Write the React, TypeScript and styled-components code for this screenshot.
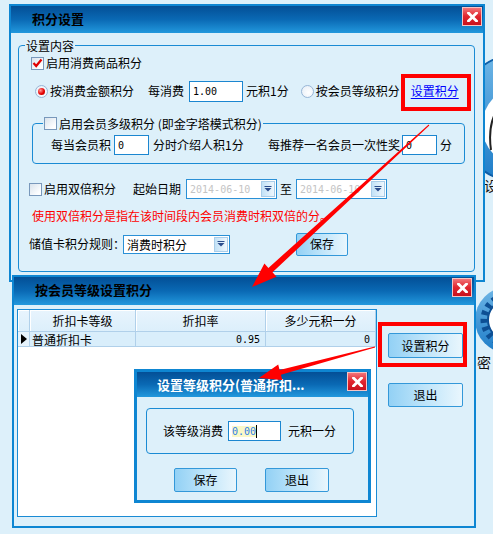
import React from "react";
import styled, { createGlobalStyle } from "styled-components";

const BG = "#ddf0fa";
const LINE = "#1a8bd4";

const GlobalStyle = createGlobalStyle`
  html, body {
    margin: 0;
    padding: 0;
    background: ${BG};
  }
  body {
    font-family: "Noto Sans CJK SC", "Noto Sans", sans-serif;
    font-size: 12px;
    color: #000;
  }
`;

const Desktop = styled.div`
  position: relative;
  width: 493px;
  height: 534px;
  overflow: hidden;
  background: ${BG};
`;

const DesktopArt = styled.svg`
  position: absolute;
  left: 0;
  top: 0;
`;

const DesktopGlyph = styled.span<{ $x: number; $y: number }>`
  position: absolute;
  left: ${(p) => p.$x}px;
  top: ${(p) => p.$y}px;
  font-size: 14px;
  line-height: 16px;
  color: #111;
`;

const Window = styled.div<{ $x: number; $y: number; $w: number; $h: number; $border: number }>`
  position: absolute;
  left: ${(p) => p.$x}px;
  top: ${(p) => p.$y}px;
  width: ${(p) => p.$w}px;
  height: ${(p) => p.$h}px;
  box-sizing: border-box;
  border: ${(p) => p.$border}px solid #0e86d2;
  background: ${BG};
  display: flex;
  flex-direction: column;
`;

const TitleBar = styled.div<{ $h: number }>`
  flex: none;
  height: ${(p) => p.$h}px;
  display: flex;
  align-items: flex-start;
  background: linear-gradient(#034f96, #0a69b4 50%, #2298dd);
`;

const Title = styled.div<{ $pad: number; $lh: number; $light?: boolean }>`
  flex: 1;
  padding-left: ${(p) => p.$pad}px;
  line-height: ${(p) => p.$lh}px;
  font-size: 13px;
  font-weight: bold;
  color: ${(p) => (p.$light ? "#fff" : "#000")};
  white-space: nowrap;
  overflow: hidden;
`;

const CloseBox = styled.div<{ $mt: number; $mr: number }>`
  flex: none;
  width: 20px;
  height: 19px;
  margin: ${(p) => p.$mt}px ${(p) => p.$mr}px 0 0;
  box-sizing: border-box;
  border: 1px solid #f6c4c4;
  background: linear-gradient(#f27479, #e1262f 48%, #c9111d);
  display: flex;
  align-items: center;
  justify-content: center;
`;

const Body = styled.div<{ $pad: string; $row?: boolean }>`
  flex: 1;
  padding: ${(p) => p.$pad};
  display: flex;
  flex-direction: ${(p) => (p.$row ? "row" : "column")};
  align-items: flex-start;
  min-height: 0;
`;

const Group = styled.div<{ $pad: string; $mt?: number; $ml?: number }>`
  position: relative;
  align-self: stretch;
  margin: ${(p) => p.$mt ?? 0}px 0 0 ${(p) => p.$ml ?? 0}px;
  padding: ${(p) => p.$pad};
  border: 1px solid ${LINE};
  border-radius: 4px;
  display: flex;
  flex-direction: column;
`;

const Legend = styled.div<{ $left: number }>`
  position: absolute;
  top: -8px;
  left: ${(p) => p.$left}px;
  height: 15px;
  padding: 0 1px;
  background: ${BG};
  display: flex;
  align-items: center;
  gap: 2px;
  line-height: 15px;
  white-space: nowrap;
`;

const Row = styled.div<{ $h: number; $mt?: number; $pl?: number }>`
  display: flex;
  align-items: center;
  height: ${(p) => p.$h}px;
  margin-top: ${(p) => p.$mt ?? 0}px;
  padding-left: ${(p) => p.$pl ?? 0}px;
  white-space: nowrap;
`;

const Label = styled.span<{ $ml?: number; $auto?: boolean }>`
  flex: none;
  margin-left: ${(p) => (p.$auto ? "auto" : `${p.$ml ?? 0}px`)};
  line-height: 14px;
`;

const Warning = styled(Label)`
  color: #ff0000;
`;

const LinkText = styled(Label)`
  color: #0000ff;
  text-decoration: underline;
  text-underline-offset: 2px;
`;

const CheckBox = styled.span<{ $ml?: number }>`
  flex: none;
  width: 13px;
  height: 13px;
  margin-left: ${(p) => p.$ml ?? 0}px;
  box-sizing: border-box;
  border: 1px solid #7898bb;
  background: linear-gradient(135deg, #d9e3ec, #fdfeff 80%);
  display: inline-flex;
  align-items: center;
  justify-content: center;
`;

const Radio = styled.span<{ $on?: boolean; $ml?: number }>`
  flex: none;
  width: 13px;
  height: 13px;
  margin-left: ${(p) => p.$ml ?? 0}px;
  box-sizing: border-box;
  border: 1px solid #97b6d6;
  border-radius: 50%;
  background: radial-gradient(circle at 60% 60%, #ffffff, #e3ecf5);
  display: inline-flex;
  align-items: center;
  justify-content: center;
  &::after {
    content: "";
    display: ${(p) => (p.$on ? "block" : "none")};
    width: 7px;
    height: 7px;
    border-radius: 50%;
    background: radial-gradient(circle at 35% 35%, #ff9a9a, #e60000 55%, #a80000);
  }
`;

const TextBox = styled.span<{ $w: number; $h: number; $ml?: number }>`
  flex: none;
  width: ${(p) => p.$w}px;
  height: ${(p) => p.$h}px;
  margin-left: ${(p) => p.$ml ?? 0}px;
  box-sizing: border-box;
  border: 1px solid #1b86d0;
  background: #fff;
  padding-left: 3px;
  display: flex;
  align-items: center;
  font-family: "DejaVu Sans Mono", "Liberation Mono", monospace;
  font-size: 10px;
`;

const Picker = styled.span<{ $w: number; $h: number; $ml?: number }>`
  flex: none;
  width: ${(p) => p.$w}px;
  height: ${(p) => p.$h}px;
  margin-left: ${(p) => p.$ml ?? 0}px;
  box-sizing: border-box;
  border: 1px solid #2a90d6;
  background: #fff;
  display: flex;
  align-items: stretch;
`;

const PickerText = styled.span<{ $muted?: boolean; $mono?: boolean }>`
  flex: 1;
  padding-left: 3px;
  display: flex;
  align-items: center;
  color: ${(p) => (p.$muted ? "#c4c4c4" : "#000")};
  font-family: ${(p) =>
    p.$mono ? `"DejaVu Sans Mono", "Liberation Mono", monospace` : "inherit"};
  font-size: ${(p) => (p.$mono ? 10 : 12)}px;
  overflow: hidden;
`;

const DropButton = styled.span`
  flex: none;
  width: 14px;
  margin: 1px;
  box-sizing: border-box;
  border: 1px solid #a9cde9;
  background: linear-gradient(90deg, #c3e2f7, #eef7fd);
  display: flex;
  align-items: center;
  justify-content: center;
`;

const Button = styled.span<{ $w: number; $h: number; $ml?: number; $mt?: number }>`
  flex: none;
  width: ${(p) => p.$w}px;
  height: ${(p) => p.$h}px;
  margin: ${(p) => p.$mt ?? 0}px 0 0 ${(p) => p.$ml ?? 0}px;
  box-sizing: border-box;
  border: 1px solid #3398d9;
  border-radius: 2px;
  background: linear-gradient(90deg, #93d1f5, #bfe5fa 50%, #e9f6fd);
  display: flex;
  align-items: center;
  justify-content: center;
  line-height: 14px;
`;

const SideColumn = styled.div`
  display: flex;
  flex-direction: column;
  margin-left: 11px;
  padding-top: 24px;
`;

const Grid = styled.div`
  flex: none;
  width: 360px;
  height: 208px;
  box-sizing: border-box;
  border: 1px solid ${LINE};
  background: #fff;
  display: grid;
  grid-template-columns: 12px 106px 130px 110px;
  grid-template-rows: 22px 15px;
  align-content: start;
`;

const HeadCell = styled.div`
  box-sizing: border-box;
  border-right: 1px solid #b0d0ea;
  border-bottom: 1px solid #b0d0ea;
  background: linear-gradient(#e8f4fd, #dceffb);
  box-shadow: inset 1px 1px 0 #fff;
  display: flex;
  align-items: center;
  justify-content: center;
  line-height: 14px;
  white-space: nowrap;
`;

const DataCell = styled.div<{ $right?: boolean; $mono?: boolean }>`
  box-sizing: border-box;
  border-right: 1px solid #b0d0ea;
  border-bottom: 1px solid #b0d0ea;
  background: #d9eefb;
  display: flex;
  align-items: center;
  justify-content: ${(p) => (p.$right ? "flex-end" : "flex-start")};
  padding: ${(p) => (p.$right ? "0 5px 0 0" : "0 0 0 2px")};
  font-family: ${(p) =>
    p.$mono ? `"DejaVu Sans Mono", "Liberation Mono", monospace` : "inherit"};
  font-size: ${(p) => (p.$mono ? 10 : 12)}px;
  line-height: 13px;
  white-space: nowrap;
  overflow: hidden;
`;

const RowMarker = styled(DataCell)`
  background: #e6f3fc;
  justify-content: center;
  padding: 0;
  &::before {
    content: "";
    border-left: 6px solid #000;
    border-top: 5px solid transparent;
    border-bottom: 5px solid transparent;
  }
`;

const Selected = styled.span`
  background: #fbf8c8;
  color: #2f7fe6;
`;

const Caret = styled.span`
  width: 1px;
  height: 13px;
  background: #000;
`;

const Highlight = styled.div<{ $x: number; $y: number; $w: number; $h: number }>`
  position: absolute;
  left: ${(p) => p.$x}px;
  top: ${(p) => p.$y}px;
  width: ${(p) => p.$w}px;
  height: ${(p) => p.$h}px;
  box-sizing: border-box;
  border: 4px solid #ff0000;
`;

const Overlay = styled.svg`
  position: absolute;
  left: 0;
  top: 0;
  pointer-events: none;
`;

const Tick = () => (
  <svg width="11" height="10" viewBox="0 0 11 10">
    <polyline points="1.5,5 4.2,8 9.5,1.5" fill="none" stroke="#e00000" strokeWidth="2.2" />
  </svg>
);

const DownArrow = () => (
  <svg width="8" height="6" viewBox="0 0 8 6">
    <rect x="0.5" y="0" width="7" height="1" fill="#2b4c8c" />
    <polygon points="0.5,2 7.5,2 4,5.5" fill="#2b4c8c" />
  </svg>
);

const Close = ({ mt, mr }: { mt: number; mr: number }) => (
  <CloseBox $mt={mt} $mr={mr}>
    <svg width="11" height="10" viewBox="0 0 11 10">
      <path d="M1.5 1 L9.5 9 M9.5 1 L1.5 9" stroke="#fff" strokeWidth="2.8" strokeLinecap="square" />
    </svg>
  </CloseBox>
);

const DateBox = ({ ml }: { ml: number }) => (
  <Picker $w={91} $h={20} $ml={ml}>
    <PickerText $muted $mono>
      2014-06-10
    </PickerText>
    <DropButton>
      <DownArrow />
    </DropButton>
  </Picker>
);

// tapered red arrow, thin at the tail and widening towards the head
const arrowPoints = (
  x1: number,
  y1: number,
  x2: number,
  y2: number,
  head: number,
  headHalf: number,
  neck: number
) => {
  const len = Math.hypot(x2 - x1, y2 - y1);
  const ux = (x2 - x1) / len;
  const uy = (y2 - y1) / len;
  const nx = -uy;
  const ny = ux;
  const bx = x2 - ux * head;
  const by = y2 - uy * head;
  const pts = [
    [x1 + nx * 0.5, y1 + ny * 0.5],
    [bx + nx * neck, by + ny * neck],
    [bx + nx * headHalf, by + ny * headHalf],
    [x2, y2],
    [bx - nx * headHalf, by - ny * headHalf],
    [bx - nx * neck, by - ny * neck],
    [x1 - nx * 0.5, y1 - ny * 0.5],
  ];
  return pts.map((p) => `${p[0].toFixed(1)},${p[1].toFixed(1)}`).join(" ");
};

export default function App() {
  return (
    <Desktop>
      <GlobalStyle />

      <DesktopArt width={493} height={534}>
        <defs>
          <linearGradient id="disc" x1="0" y1="0" x2="0" y2="1">
            <stop offset="0" stopColor="#6fb6e6" />
            <stop offset="1" stopColor="#1d7cc8" />
          </linearGradient>
        </defs>
        <circle cx={520} cy={118} r={64} fill="url(#disc)" stroke="#0d5ea8" strokeWidth={2} />
        <circle cx={522} cy={126} r={40} fill="#fff" />
        <path d="M491 150 Q487 122 500 106" fill="none" stroke="#222" strokeWidth={2} />
        <circle cx={508} cy={320} r={33} fill="url(#disc)" />
        <circle cx={508} cy={320} r={24} fill="none" stroke="#0d4f94" strokeWidth={7} strokeDasharray="4 4" />
        <circle cx={508} cy={320} r={20} fill="#fff" stroke="#0d4f94" strokeWidth={2} />
      </DesktopArt>
      <DesktopGlyph $x={484} $y={177}>设</DesktopGlyph>
      <DesktopGlyph $x={477} $y={354}>密</DesktopGlyph>

      <Window $x={9} $y={4} $w={476} $h={278} $border={2}>
        <TitleBar $h={27}>
          <Title $pad={21} $lh={25}>积分设置</Title>
          <Close mt={1} mr={1} />
        </TitleBar>
        <Body $pad="12px 8px 0 7px">
          <Group $pad="6px 9px 15px 10px">
            <Legend $left={6}>设置内容</Legend>
            <Row $h={22} $pl={2}>
              <CheckBox>
                <Tick />
              </CheckBox>
              <Label $ml={2}>启用消费商品积分</Label>
            </Row>
            <Row $h={34} $pl={6}>
              <Radio $on />
              <Label $ml={2}>按消费金额积分</Label>
              <Label $ml={14}>每消费</Label>
              <TextBox $w={54} $h={21} $ml={5}>
                1.00
              </TextBox>
              <Label $ml={3}>元积1分</Label>
              <Radio $ml={12} />
              <Label $ml={2}>按会员等级积分</Label>
              <LinkText $ml={11}>设置积分</LinkText>
            </Row>
            <Group $mt={15} $ml={3} $pad="10px 12px 7px 18px">
              <Legend $left={10}>
                <CheckBox />
                <span>启用会员多级积分 (即金字塔模式积分)</span>
              </Legend>
              <Row $h={22}>
                <Label>每当会员积</Label>
                <TextBox $w={35} $h={20} $ml={3}>
                  0
                </TextBox>
                <Label $ml={4}>分时介绍人积1分</Label>
                <Label $auto>每推荐一名会员一次性奖</Label>
                <TextBox $w={35} $h={20} $ml={2}>
                  0
                </TextBox>
                <Label $ml={3}>分</Label>
              </Row>
            </Group>
            <Row $h={24} $mt={13}>
              <CheckBox />
              <Label $ml={2}>启用双倍积分</Label>
              <Label $ml={17}>起始日期</Label>
              <DateBox ml={5} />
              <Label $ml={3}>至</Label>
              <DateBox ml={4} />
            </Row>
            <Row $h={20} $mt={5} $pl={3}>
              <Warning>使用双倍积分是指在该时间段内会员消费时积双倍的分。</Warning>
            </Row>
            <Row $h={24} $mt={6}>
              <Label>储值卡积分规则：</Label>
              <Picker $w={107} $h={19} $ml={-2}>
                <PickerText>消费时积分</PickerText>
                <DropButton>
                  <DownArrow />
                </DropButton>
              </Picker>
              <Button $w={52} $h={23} $ml={66}>
                保存
              </Button>
            </Row>
          </Group>
        </Body>
      </Window>

      <Window $x={12} $y={275} $w={464} $h={253} $border={2}>
        <TitleBar $h={28}>
          <Title $pad={21} $lh={26}>按会员等级设置积分</Title>
          <Close mt={1} mr={2} />
        </TitleBar>
        <Body $pad="4px 0 0 3px" $row>
          <Grid>
            <HeadCell />
            <HeadCell>折扣卡等级</HeadCell>
            <HeadCell>折扣率</HeadCell>
            <HeadCell>多少元积一分</HeadCell>
            <RowMarker />
            <DataCell>普通折扣卡</DataCell>
            <DataCell $right $mono>
              0.95
            </DataCell>
            <DataCell $right $mono>
              0
            </DataCell>
          </Grid>
          <SideColumn>
            <Button $w={75} $h={25}>
              设置积分
            </Button>
            <Button $w={75} $h={24} $mt={25}>
              退出
            </Button>
          </SideColumn>
        </Body>
      </Window>

      <Window $x={134} $y={369} $w={237} $h={134} $border={3}>
        <TitleBar $h={25}>
          <Title $pad={20} $lh={25} $light>
            设置等级积分(普通折扣...
          </Title>
          <Close mt={0} mr={1} />
        </TitleBar>
        <Body $pad="11px 14px 0 9px">
          <Group $pad="0 0 0 16px">
            <Row $h={44}>
              <Label>该等级消费</Label>
              <TextBox $w={53} $h={20} $ml={5}>
                <Selected>0.00</Selected>
                <Caret />
              </TextBox>
              <Label $ml={7}>元积一分</Label>
            </Row>
          </Group>
          <Row $h={24} $mt={14} $pl={28}>
            <Button $w={63} $h={24}>
              保存
            </Button>
            <Button $w={64} $h={24} $ml={28}>
              退出
            </Button>
          </Row>
        </Body>
      </Window>

      <Highlight $x={401} $y={74} $w={70} $h={37} />
      <Highlight $x={378} $y={322} $w={89} $h={45} />

      <Overlay width={493} height={534}>
        <polygon points={arrowPoints(429, 125, 252, 287, 25, 9, 3)} fill="#ff0000" />
        <polygon points={arrowPoints(375, 347, 259, 378, 22, 8, 2.5)} fill="#ff0000" />
      </Overlay>
    </Desktop>
  );
}
